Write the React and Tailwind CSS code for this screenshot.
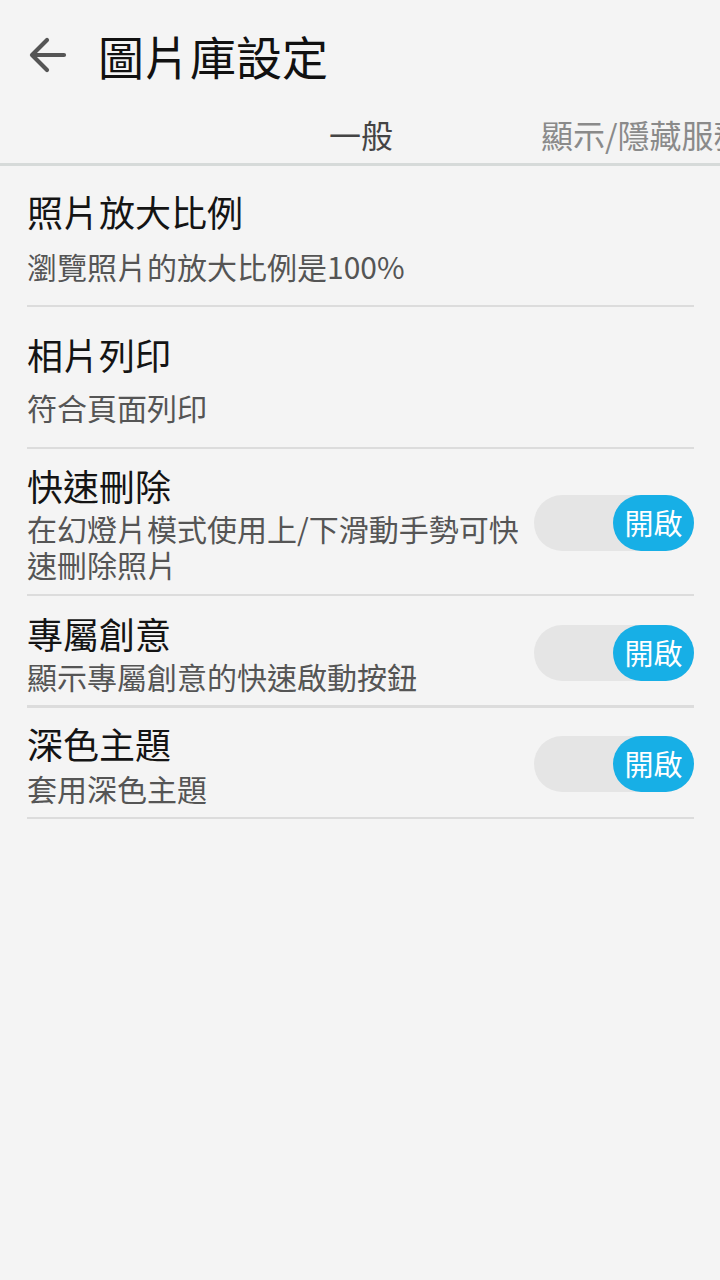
import React from "react";

const font = { fontFamily: '"Noto Sans CJK TC", "Noto Sans", sans-serif' };

function Toggle() {
  return (
    <div className="relative flex h-[56px] w-[160px] shrink-0 items-center justify-end rounded-full bg-[#e5e5e5]">
      <div className="flex h-[56px] w-[81px] items-center justify-center rounded-full bg-[#17afe6] text-[29px] leading-none text-white">
        開啟
      </div>
    </div>
  );
}

function Item({ title, sub, toggle, pad, gap, divider = "h-[2px]" }) {
  return (
    <div className="flex flex-col">
      <div className={`flex items-center gap-[8px] ${pad}`}>
        <div className={`flex min-w-0 flex-1 flex-col ${gap}`}>
          <div className="text-[36px] leading-[44px] text-[#141414]">{title}</div>
          <div className="text-[30px] leading-[36px] text-[#555555]">{sub}</div>
        </div>
        {toggle && <Toggle />}
      </div>
      <div className={`${divider} bg-[#dcdcdc]`} />
    </div>
  );
}

export default function App() {
  return (
    <div style={font} className="flex h-[1280px] w-[720px] flex-col overflow-hidden bg-[#f4f4f4]">
      <div className="flex h-[112px] items-center pb-[2px]">
        <div className="ml-[26px] flex h-[44px] w-[44px] items-center justify-center">
          <svg width="40" height="40" viewBox="0 0 40 40" fill="none" stroke="#555" strokeWidth="4.2" strokeLinecap="round" strokeLinejoin="round">
            <path d="M36 20H5" />
            <path d="M19 5L4 20l15 15" />
          </svg>
        </div>
        <div className="ml-[28px] text-[46px] leading-none text-[#111]">圖片庫設定</div>
      </div>
      <div className="flex h-[51px] items-center overflow-hidden whitespace-nowrap pb-[7px]">
        <div className="ml-[329px] text-[32px] leading-none text-[#444]">一般</div>
        <div className="ml-[148px] text-[32px] leading-none text-[#8a8a8a]">顯示/隱藏服務</div>
      </div>
      <div className="h-[3px] bg-[#d6dad9]" />
      <div className="flex flex-col pl-[27px] pr-[26px]">
        <Item title="照片放大比例" sub="瀏覽照片的放大比例是100%" pad="pt-[23px] pb-[21px]" gap="gap-[15px]" />
        <Item title="相片列印" sub="符合頁面列印" pad="pt-[25px] pb-[22px]" gap="gap-[13px]" />
        <Item
          title="快速刪除"
          sub="在幻燈片模式使用上/下滑動手勢可快速刪除照片"
          toggle
          pad="pt-[14px] pb-[12px]"
          gap="gap-[3px]"
        />
        <Item
          title="專屬創意"
          sub="顯示專屬創意的快速啟動按鈕"
          toggle
          pad="pt-[15px] pb-[11px]"
          gap="gap-[3px]"
          divider="h-[3px]"
        />
        <Item title="深色主題" sub="套用深色主題" toggle pad="pt-[13px] pb-[11px]" gap="gap-[5px]" />
      </div>
    </div>
  );
}
